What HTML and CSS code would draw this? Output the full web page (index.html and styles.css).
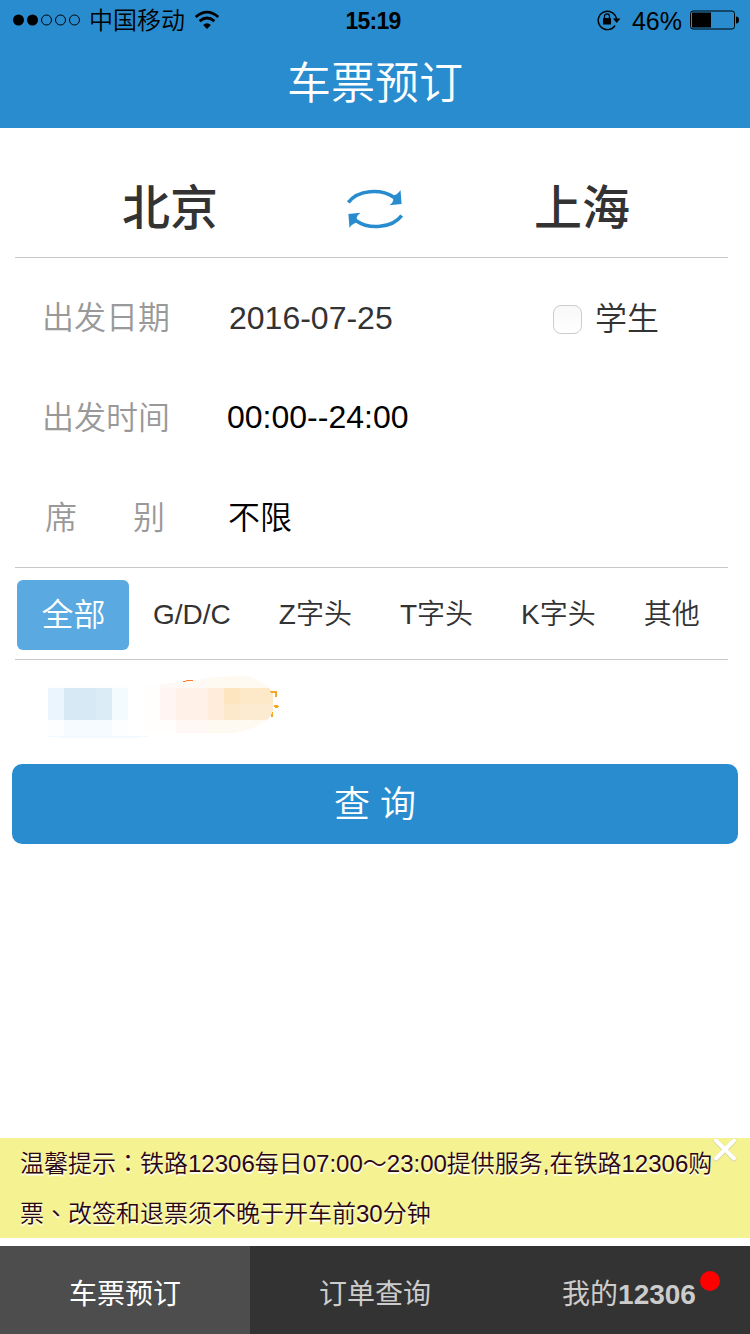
FILE: index.html
```
<!DOCTYPE html>
<html lang="zh-CN">
<head>
    <meta charset="UTF-8">
    <meta name="viewport" content="width=device-width, initial-scale=1.0">
    <title>车票预订</title>
    <link rel="stylesheet" href="styles.css">
</head>
<body>
    <header>
        <div class="status-bar">
            <div class="status-left">
                <svg class="signal" width="70" height="14" viewBox="0 0 70 14">
                    <circle cx="6.5" cy="7" r="5.5"/>
                    <circle cx="20.5" cy="7" r="5.5"/>
                    <circle class="empty" cx="34.5" cy="7" r="5"/>
                    <circle class="empty" cx="48.5" cy="7" r="5"/>
                    <circle class="empty" cx="62.5" cy="7" r="5"/>
                </svg>
                <span class="carrier">中国移动</span>
                <svg class="wifi" width="26" height="20" viewBox="0 0 26 20">
                    <path d="M1.7 7.1Q13-2.7 24.3 7.1" fill="none" stroke="#000" stroke-width="2.7"/>
                    <path d="M5.6 11.1Q13 4.9 20.4 11.1" fill="none" stroke="#000" stroke-width="2.7"/>
                    <path d="M9.1 14.9Q13 11.5 16.9 14.9L13 19z"/>
                </svg>
            </div>
            <div class="clock">15:19</div>
            <div class="status-right">
                <svg class="lock" width="24" height="22" viewBox="0 0 24 22">
                    <path d="M18.1 16.5A9.2 9.2 0 1 1 19.5 10" fill="none" stroke="#000" stroke-width="1.4"/>
                    <path d="M16 9.5h7.4L19.7 14z"/>
                    <rect x="6" y="9" width="8" height="6.5" rx=".6"/>
                    <path d="M7.5 9V7.3a2.5 2.5 0 0 1 5 0V9" fill="none" stroke="#000" stroke-width="1.2"/>
                </svg>
                <span class="percent">46%</span>
                <svg class="battery" width="49" height="20" viewBox="0 0 49 20">
                    <rect x=".5" y="1" width="44" height="18" rx="2.5" fill="none" stroke="#000"/>
                    <rect x="2" y="2.5" width="19" height="15"/>
                    <path d="M46 6.5q3 0 3 3.5t-3 3.5z"/>
                </svg>
            </div>
        </div>
        <h1>车票预订</h1>
    </header>

    <main>
        <section class="route">
            <span class="city">北京</span>
            <svg class="swap" width="56" height="42" viewBox="0 0 56 42">
                <g id="arrow">
                    <path d="M1.3 14.5C11 1.5 34 .5 46.5 9" fill="none" stroke="#298ccf" stroke-width="3.6"/>
                    <path d="M53.5 2L54.6 16L42.5 17.2Q46.5 14 46.3 11.5L43.5 7.5Q50 8 53.5 2z" fill="#298ccf"/>
                </g>
                <use href="#arrow" transform="rotate(180 28 21)"/>
            </svg>
            <span class="city">上海</span>
        </section>

        <section class="fields">
            <div class="field">
                <span class="label">出发日期</span>
                <span class="value date">2016-07-25</span>
                <label class="student"><span class="checkbox"></span><span class="cjk">学生</span></label>
            </div>
            <div class="field">
                <span class="label">出发时间</span>
                <span class="value time">00:00--24:00</span>
            </div>
            <div class="field">
                <span class="label seat"><span>席</span><span>别</span></span>
                <span class="value seat-value">不限</span>
            </div>
        </section>

        <nav class="types">
            <a class="active">全部</a>
            <a>G/D/C</a>
            <a>Z字头</a>
            <a>T字头</a>
            <a>K字头</a>
            <a>其他</a>
        </nav>
    </main>

    <div class="promo">
        <svg width="320" height="104" viewBox="0 660 320 104" shape-rendering="crispEdges">
            <path d="M48 686h16l2-1h12l2 1h10l6-1h14l2 1h16v50H48z" fill="#fcfeff"/>
            <path d="M48 688h16v32H48z" fill="#ebf5fd"/>
            <path d="M64 688h48v32H64z" fill="#d8e9f6"/>
            <path d="M96 688h16v32H96z" fill="#dbecf6"/>
            <path d="M112 688h16v32h-16z" fill="#f4fbff"/>
            <path d="M64 720h48v16H64z" fill="#f6fbff"/>
            <path d="M47 736h101v1h-10v1H59v-1H47z" fill="#f3faff"/>
            <clipPath id="blob">
                <path d="M144 686L165 684L196 680L214 677L240 676L247 676Q268 682 273 694V710Q270 726 234 733H144z"/>
            </clipPath>
            <g clip-path="url(#blob)">
                <path d="M144 676h64v58h-64z" fill="#fffefd"/>
                <path d="M160 676h48v12h-48z" fill="#fff9f6"/>
                <path d="M208 676h70v58h-70z" fill="#fffaf1"/>
                <path d="M160 688h16v32h-16z" fill="#fff6f4"/>
                <path d="M176 688h32v32h-32z" fill="#fff0e8"/>
                <path d="M176 720h32v14h-32z" fill="#fff8f5"/>
                <path d="M208 688h16v32h-16z" fill="#ffecdb"/>
                <path d="M224 688h16v16h-16z" fill="#fde5c0"/>
                <path d="M224 704h16v16h-16z" fill="#fce8cb"/>
                <path d="M240 688h34v16h-34z" fill="#fde9c7"/>
                <path d="M240 704h34v16h-34z" fill="#fcebd0"/>
            </g>
            <path d="M183 681h3v-1h7v1h-7v1h-3z" fill="#ff7a20"/>
            <path d="M270 691h7v6h-2v-4h-4zM274 705h4v1h1v1h-1v1h-3v-1h-1zM272 712h1v5h-2v-3h1z" fill="#f5a623"/>
        </svg>
    </div>

    <button type="button">查 询</button>

    <div class="notice">
        温馨提示<span class="mark" lang="zh-TW">：</span>铁路12306每日07:00～23:00提供服务,在铁路12306购<br>票<span class="mark" lang="zh-TW">、</span>改签和退票须不晚于开车前30分钟
        <svg class="close" width="26" height="24" viewBox="0 0 26 24">
            <path d="M4 3L22 21M22 3L4 21" stroke="#aaa" stroke-width="4.6" stroke-linecap="round" opacity=".5"/>
            <path d="M4 2.5L22 20.5M22 2.5L4 20.5" stroke="#fff" stroke-width="4" stroke-linecap="round"/>
        </svg>
    </div>

    <footer>
        <a class="active">车票预订</a>
        <a>订单查询</a>
        <a class="mine">我的<b>12306</b><span class="dot"></span></a>
    </footer>
</body>
</html>
```

FILE: styles.css
```
* {
    box-sizing: border-box;
}
body {
    margin: 0;
    height: 1334px;
    display: flex;
    flex-direction: column;
    background-color: #fff;
    color: #333;
    font-family: "Liberation Sans", "Noto Sans CJK SC", sans-serif;
    font-size: 32px;
    font-weight: 350;
    overflow: hidden;
}
header {
    height: 128px;
    background-color: #298ccf;
}
.status-bar {
    height: 40px;
    padding: 0 11px 0 12px;
    display: grid;
    grid-template-columns: 1fr auto 1fr;
    grid-template-rows: 40px;
    align-items: center;
    color: #000;
    font-size: 24px;
    line-height: 38px;
}
.status-left, .status-right {
    height: 40px;
    display: flex;
    align-items: center;
}
.status-right {
    justify-content: flex-end;
}
.signal .empty {
    fill: none;
    stroke: #000;
}
.carrier {
    margin: 2px 0 0 7px;
}
.wifi {
    margin-left: 9px;
}
.clock {
    padding: 2px 5px 0 0;
    font-weight: bold;
    font-size: 23px;
    letter-spacing: -0.8px;
}
.percent {
    margin: 2px 8px 0 11px;
    font-size: 25px;
}
h1 {
    margin: 0;
    color: #fff;
    font-size: 44px;
    font-weight: 350;
    line-height: 88px;
    text-align: center;
}
main {
    margin: 0 22px 0 15px;
}
.route {
    height: 130px;
    padding: 32px 98px 0 107px;
    display: flex;
    justify-content: space-between;
    align-items: center;
    border-bottom: 1px solid #c8c8c8;
}
.city {
    margin-bottom: 10px;
    font-size: 48px;
    font-weight: 500;
}
.swap {
    margin-right: 2px;
}
.fields {
    height: 310px;
    padding-top: 10px;
    border-bottom: 1px solid #c8c8c8;
}
.field {
    height: 100px;
    padding-left: 27px;
    display: flex;
    align-items: center;
}
.label {
    width: 185px;
    margin-bottom: 7px;
    color: #999;
}
.seat {
    padding: 0 62px 0 3px;
    display: flex;
    justify-content: space-between;
}
.value {
    color: #000;
}
.date {
    width: 326px;
    padding-left: 2px;
    color: #333;
}
.time {
    margin-bottom: 2px;
}
.seat-value {
    margin-bottom: 6px;
    padding-left: 1px;
}
.student {
    display: flex;
    align-items: center;
}
.checkbox {
    width: 29px;
    height: 29px;
    margin: 3px 13px 0 0;
    border: 1px solid #ccc;
    border-radius: 8px;
    background: linear-gradient(#f8f8f8, #fff);
}
.student .cjk {
    margin-bottom: 4px;
}
.types {
    height: 92px;
    padding-left: 2px;
    display: flex;
    align-items: center;
    border-bottom: 1px solid #c8c8c8;
    font-size: 28px;
    line-height: 42px;
}
.types a {
    margin-right: 48px;
    padding-top: 2px;
    flex: none;
    white-space: nowrap;
}
.types .active {
    width: 112px;
    height: 70px;
    margin: 2px 24px 0 0;
    padding: 0 0 0 1px;
    border-radius: 6px;
    background-color: #5aa9e0;
    color: #fff;
    font-size: 32px;
    line-height: 70px;
    text-align: center;
}
.types a:last-child {
    margin-right: 0;
}
.promo {
    height: 104px;
}
.promo svg {
    display: block;
}
button {
    height: 80px;
    margin: 0 12px;
    padding: 0 0 7px;
    flex: none;
    border: none;
    border-radius: 10px;
    background-color: #298ccf;
    color: #fff;
    font-family: inherit;
    font-size: 36px;
    font-weight: 350;
}
.notice {
    position: relative;
    height: 100px;
    margin: auto 0 8px;
    padding: 1px 0 0 20px;
    background-color: #f5f391;
    color: #2b0616;
    font-size: 24px;
    line-height: 50px;
    text-shadow: 0 2px 1px #fff;
    white-space: nowrap;
}
.mark {
    font-family: "Noto Sans CJK TC", sans-serif;
    line-height: 1;
}
.close {
    position: absolute;
    top: 0;
    right: 12px;
}
footer {
    height: 88px;
    display: flex;
    background-color: #333;
    color: #ccc;
    font-size: 28px;
    font-weight: 400;
    line-height: 98px;
    text-align: center;
}
footer a {
    width: 250px;
    flex: none;
}
footer b {
    font-weight: 700;
}
footer .active {
    background-color: #4d4d4d;
    color: #fff;
}
.mine {
    position: relative;
    padding-left: 8px;
}
.dot {
    position: absolute;
    top: 25px;
    right: 30px;
    width: 20px;
    height: 20px;
    border-radius: 50%;
    background-color: #f00;
}
```
